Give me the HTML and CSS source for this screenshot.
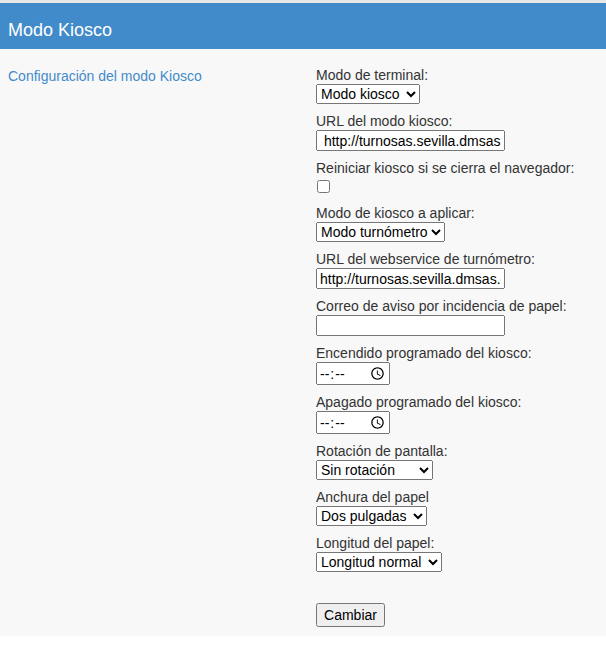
FILE: index.html
```html
<!DOCTYPE html>
<html lang="es">
<head>
<meta charset="utf-8">
<title>Modo Kiosco</title>
<link rel="stylesheet" href="styles.css">
</head>
<body>
<div class="topline"></div>
<div class="panel">
  <div class="panel-heading">Modo Kiosco</div>
  <div class="panel-body">
    <div class="side"><a class="side-link" href="#">Configuración del modo Kiosco</a></div>
    <form class="form">
      <div class="field">
        <label class="lbl">Modo de terminal:</label>
        <select class="ctl sel w-terminal"><option>Modo kiosco</option><option>Modo normal</option></select>
      </div>
      <div class="field">
        <label class="lbl">URL del modo kiosco:</label>
        <input class="ctl txt" type="text" value=" http://turnosas.sevilla.dmsas.es/kiosco">
      </div>
      <div class="field">
        <label class="lbl">Reiniciar kiosco si se cierra el navegador:</label>
        <input class="chk" type="checkbox">
      </div>
      <div class="field">
        <label class="lbl">Modo de kiosco a aplicar:</label>
        <select class="ctl sel w-modo"><option>Modo turnómetro</option></select>
      </div>
      <div class="field">
        <label class="lbl">URL del webservice de turnómetro:</label>
        <input class="ctl txt" type="text" value="http://turnosas.sevilla.dmsas.es/ws">
      </div>
      <div class="field">
        <label class="lbl">Correo de aviso por incidencia de papel:</label>
        <input class="ctl txt" type="text" value="">
      </div>
      <div class="field">
        <label class="lbl">Encendido programado del kiosco:</label>
        <input class="ctl time" type="time">
      </div>
      <div class="field">
        <label class="lbl">Apagado programado del kiosco:</label>
        <input class="ctl time" type="time">
      </div>
      <div class="field">
        <label class="lbl">Rotación de pantalla:</label>
        <select class="ctl sel w-rot"><option>Sin rotación</option></select>
      </div>
      <div class="field">
        <label class="lbl">Anchura del papel</label>
        <select class="ctl sel w-anch"><option>Dos pulgadas</option></select>
      </div>
      <div class="field">
        <label class="lbl">Longitud del papel:</label>
        <select class="ctl sel w-long"><option>Longitud normal</option></select>
      </div>
      <div class="actions">
        <button class="btn" type="button">Cambiar</button>
      </div>
    </form>
  </div>
</div>
</body>
</html>
```
FILE: styles.css
```css
html, body {
  margin: 0;
  padding: 0;
  background: #ffffff;
  font-family: "Liberation Sans", Arial, sans-serif;
  font-size: 14px;
  color: #333333;
}
.topline {
  height: 3px;
  background: #e8e8e8;
}
.panel {
  background: #f8f8f8;
}
.panel-heading {
  background: #428bca;
  color: #ffffff;
  font-size: 18px;
  height: 46px;
  box-sizing: border-box;
  padding: 8px 8px 0 8px;
  line-height: 38px;
}
.panel-body {
  display: grid;
  grid-template-columns: 300px 1fr;
  column-gap: 8px;
  padding: 17px 8px 9px 8px;
}
.side {
  line-height: 18px;
  padding-top: 1px;
}
.side-link {
  color: #428bca;
  text-decoration: none;
}
.form {
  display: flex;
  flex-direction: column;
}
.field {
  display: flex;
  flex-direction: column;
  align-items: flex-start;
  margin-bottom: 8px;
}
.lbl {
  line-height: 18px;
}
.ctl {
  font-family: "Liberation Sans", Arial, sans-serif;
  font-size: 14px;
  color: #000;
  margin: 0;
  box-sizing: border-box;
}
.sel {
  height: 20px;
}
.w-terminal { width: 104px; }
.w-modo { width: 129px; }
.w-rot { width: 117px; }
.w-anch { width: 111px; }
.w-long { width: 126px; }
.txt {
  width: 189px;
  height: 21px;
}
.time {
  width: 74px;
  height: 23px;
}
.time::-webkit-datetime-edit-ampm-field {
  display: none;
}
.chk {
  margin: 3px 0 3px 1px;
}
.actions {
  padding-top: 23px;
}
.btn {
  font-family: "Liberation Sans", Arial, sans-serif;
  font-size: 14px;
  margin: 0;
  height: 24px;
  width: 69px;
}
```
